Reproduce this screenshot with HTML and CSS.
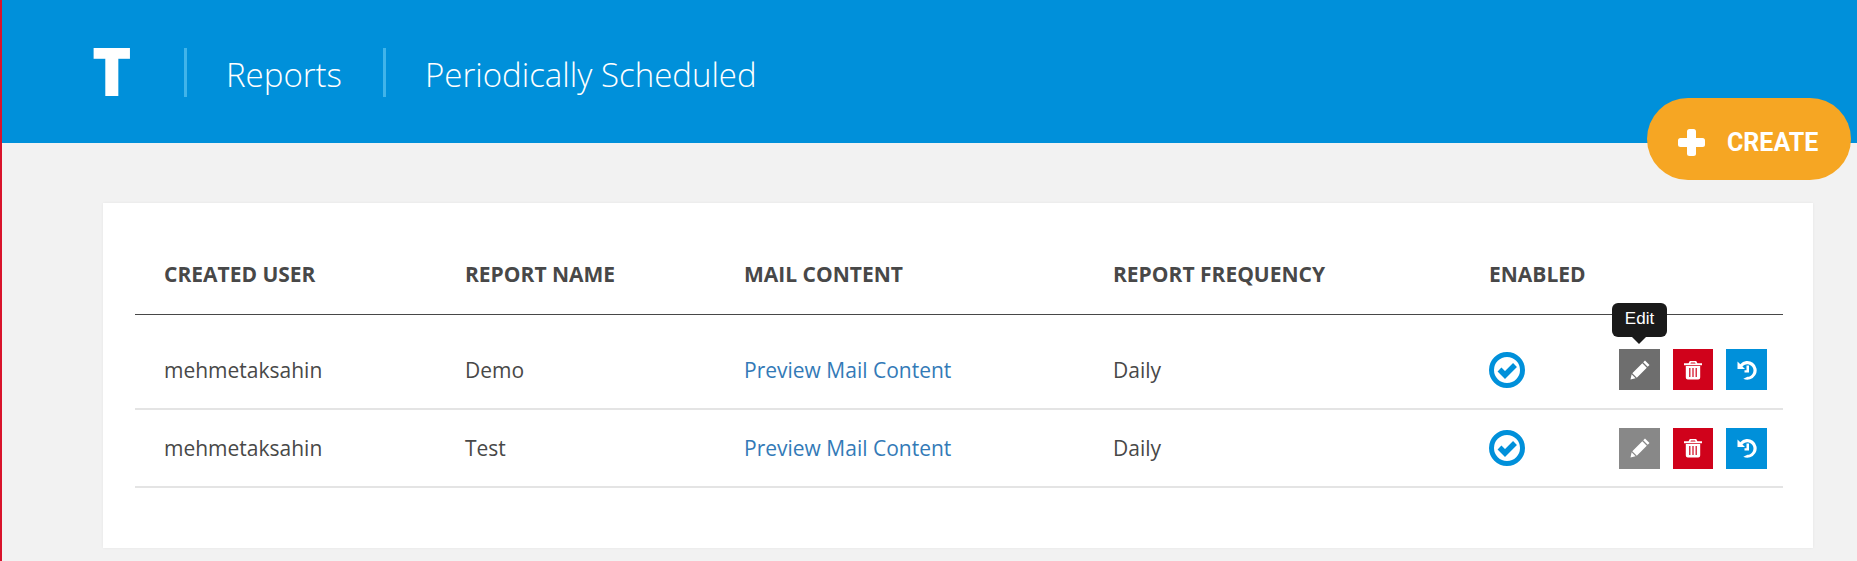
FILE: index.html
```html
<!DOCTYPE html>
<html>

<head>
    <title>Reports - Periodically Scheduled</title>
    <link rel="stylesheet" href="styles.css">
</head>

<body>
    <header class="top-bar">
        <div class="logo">T</div>
        <div class="crumb">Reports</div>
        <div class="crumb">Periodically Scheduled</div>
        <button class="create-btn" type="button">
            <svg class="create-plus" viewBox="0 0 27 27"><rect x="9" y="0" width="9" height="27" rx="2.500"/><rect x="0" y="9" width="27" height="9" rx="2.500"/></svg>
            CREATE
        </button>
    </header>

    <main class="card">
        <table class="report-table">
            <thead>
                <tr>
                    <th class="col-user">CREATED USER</th>
                    <th class="col-name">REPORT NAME</th>
                    <th class="col-mail">MAIL CONTENT</th>
                    <th class="col-freq">REPORT FREQUENCY</th>
                    <th class="col-enabled">ENABLED</th>
                    <th></th>
                </tr>
            </thead>
            <tbody>
                <tr>
                    <td>mehmetaksahin</td>
                    <td>Demo</td>
                    <td><a href="#">Preview Mail Content</a></td>
                    <td>Daily</td>
                    <td>
                        <svg class="check-icon" viewBox="0 0 36 36"><circle cx="18" cy="18" r="15.500" fill="none" stroke="#0090da" stroke-width="5"/><path d="M10.500 17.500l5.500 5.500 10-10" fill="none" stroke="#0090da" stroke-width="5.500"/></svg>
                    </td>
                    <td>
                        <div class="actions">
                            <div class="tooltip">Edit</div>
                            <a class="action action-edit is-hover" href="#">
                                <svg viewBox="0 0 20 20"><path d="M15 .5l4.500 4.500-1.800 1.800-4.500-4.500zM12.300 3.200l4.500 4.500-10 10-4.500-4.500zM1.600 14.300l4 4-5.100 1.200z"/></svg>
                            </a>
                            <a class="action action-delete" href="#">
                                <svg viewBox="0 0 20 20"><path fill-rule="evenodd" d="M6.800 1h6.400l1.200 2.200H19v2H1v-2h4.600zM8 2.500l-.6.900h5.200l-.6-.9zM2.800 6h14.400v11.500a2 2 0 0 1-2 2H4.800a2 2 0 0 1-2-2zM6.200 8v9h1.200V8zM9.400 8v9h1.200V8zM12.600 8v9h1.200V8z"/></svg>
                            </a>
                            <a class="action action-history" href="#">
                                <svg viewBox="0 0 20 20"><path d="M.5 1.500v7.500h7.500L5.400 6.400A6.300 6.300 0 1 1 10.500 16.800L6.300 18.700A9.300 9.300 0 1 0 3.300 4.300z"/><path d="M9.500 5.500h2.500v7H7.500v-2.300h2z"/></svg>
                            </a>
                        </div>
                    </td>
                </tr>
                <tr>
                    <td>mehmetaksahin</td>
                    <td>Test</td>
                    <td><a href="#">Preview Mail Content</a></td>
                    <td>Daily</td>
                    <td>
                        <svg class="check-icon" viewBox="0 0 36 36"><circle cx="18" cy="18" r="15.500" fill="none" stroke="#0090da" stroke-width="5"/><path d="M10.500 17.500l5.500 5.500 10-10" fill="none" stroke="#0090da" stroke-width="5.500"/></svg>
                    </td>
                    <td>
                        <div class="actions">
                            <a class="action action-edit" href="#">
                                <svg viewBox="0 0 20 20"><path d="M15 .5l4.500 4.500-1.800 1.800-4.500-4.500zM12.300 3.200l4.500 4.500-10 10-4.500-4.500zM1.600 14.300l4 4-5.100 1.200z"/></svg>
                            </a>
                            <a class="action action-delete" href="#">
                                <svg viewBox="0 0 20 20"><path fill-rule="evenodd" d="M6.800 1h6.400l1.200 2.200H19v2H1v-2h4.600zM8 2.500l-.6.900h5.200l-.6-.9zM2.800 6h14.400v11.500a2 2 0 0 1-2 2H4.800a2 2 0 0 1-2-2zM6.200 8v9h1.200V8zM9.400 8v9h1.200V8zM12.600 8v9h1.200V8z"/></svg>
                            </a>
                            <a class="action action-history" href="#">
                                <svg viewBox="0 0 20 20"><path d="M.5 1.500v7.500h7.500L5.400 6.400A6.300 6.300 0 1 1 10.500 16.800L6.300 18.700A9.300 9.300 0 1 0 3.300 4.300z"/><path d="M9.500 5.500h2.500v7H7.500v-2.300h2z"/></svg>
                            </a>
                        </div>
                    </td>
                </tr>
            </tbody>
        </table>
    </main>
</body>

</html>
```

FILE: styles.css
```css
* {
    box-sizing: border-box;
}

html,
body {
    height: 100%;
}

body {
    margin: 0;
    overflow: hidden;
    border-left: 2px solid #d9132c;
    font-family: "Open Sans", Arial, sans-serif;
    background-color: #f2f2f2;
    color: #484848;
}

.top-bar {
    position: relative;
    display: flex;
    align-items: center;
    height: 143px;
    padding: 48px 0 46px 90px;
    background-color: #0090da;
    color: #ffffff;
}

.logo {
    width: 92px;
    padding-bottom: 4px;
    font-size: 67px;
    font-weight: 800;
    line-height: 49px;
}

.crumb {
    display: flex;
    align-items: center;
    height: 49px;
    padding: 3px 41px 0 39px;
    border-left: 3px solid #40b4ea;
    font-size: 33px;
    font-weight: 300;
}

.create-btn {
    position: absolute;
    top: 98px;
    right: 6px;
    display: flex;
    align-items: center;
    gap: 22px;
    width: 204px;
    height: 82px;
    padding: 6px 0 0 31px;
    border: none;
    border-radius: 41px;
    background-color: #f6a623;
    color: #ffffff;
    font-family: Roboto, Arial, sans-serif;
    font-size: 25px;
    font-weight: 700;
    cursor: pointer;
}

.create-plus {
    width: 27px;
    height: 27px;
    fill: #ffffff;
}

.card {
    height: 345px;
    margin: 60px 44px 0 101px;
    padding: 0 30px 0 32px;
    background-color: #ffffff;
    box-shadow: 0px 0px 2px #e4e4e4;
}

.report-table {
    width: 100%;
    border-collapse: collapse;
    table-layout: fixed;
    font-size: 21px;
}

.report-table th {
    height: 111px;
    padding: 31px 0 0 29px;
    border-bottom: 1px solid #484848;
    font-weight: 700;
    text-align: left;
}

.report-table td {
    height: 78px;
    padding: 0 0 0 29px;
    border-bottom: 2px solid #e4e4e4;
}

.report-table tbody tr:first-child td {
    height: 95px;
    padding-top: 17px;
}

.report-table a {
    color: #337ab7;
    text-decoration: none;
}

.col-user {
    width: 301px;
}

.col-name {
    width: 279px;
}

.col-mail {
    width: 369px;
}

.col-freq {
    width: 376px;
}

.col-enabled {
    width: 130px;
}

.check-icon {
    display: block;
    width: 36px;
    height: 36px;
}

.actions {
    position: relative;
    display: flex;
    gap: 13px;
}

.action {
    display: flex;
    align-items: center;
    justify-content: center;
    width: 41px;
    height: 41px;
}

.action svg {
    width: 20px;
    height: 20px;
    fill: #ffffff;
}

.action-edit {
    background-color: #888888;
}

.action-edit.is-hover {
    background-color: #6e6e6e;
}

.action-delete {
    width: 40px;
    background-color: #d0021b;
}

.action-history {
    background-color: #0090da;
}

.tooltip {
    position: absolute;
    top: -46px;
    left: -7px;
    width: 55px;
    height: 34px;
    border-radius: 6px;
    background-color: #1a1a1a;
    color: #ffffff;
    font-family: "Liberation Sans", Arial, sans-serif;
    font-size: 17px;
    line-height: 32px;
    text-align: center;
}

.tooltip::after {
    content: "";
    position: absolute;
    top: 34px;
    left: 20px;
    border-left: 7px solid transparent;
    border-right: 7px solid transparent;
    border-top: 7px solid #1a1a1a;
}
```
